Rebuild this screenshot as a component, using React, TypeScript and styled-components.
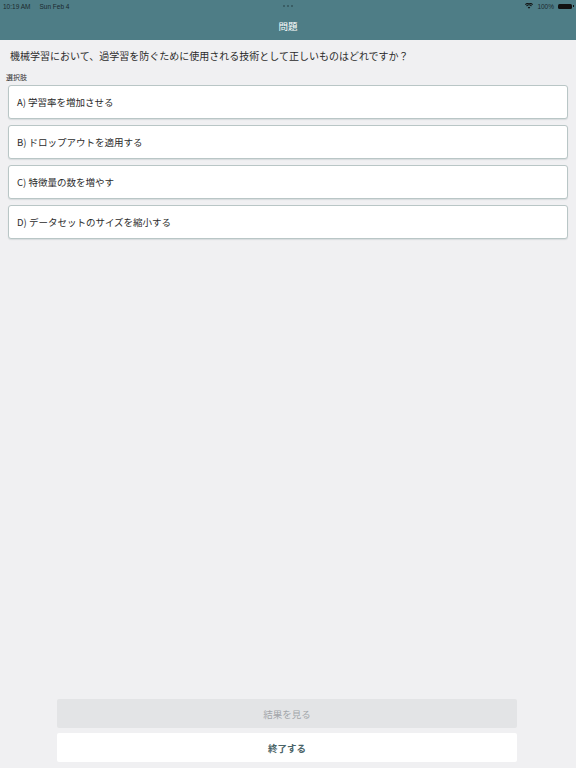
import React from "react";
import styled, { createGlobalStyle } from "styled-components";

const GlobalStyle = createGlobalStyle`
  html, body {
    margin: 0;
    padding: 0;
    background: #f0f0f2;
  }
  body {
    font-family: "Noto Sans CJK JP", "Liberation Sans", sans-serif;
  }
`;

const Page = styled.div`
  display: flex;
  flex-direction: column;
  width: 576px;
  height: 768px;
  background: #f0f0f2;
  overflow: hidden;
`;

const Header = styled.header`
  height: 40px;
  background: #4e7d86;
  display: flex;
  flex-direction: column;
  flex-shrink: 0;
`;

const StatusBar = styled.div`
  height: 12px;
  display: flex;
  align-items: center;
  justify-content: space-between;
  padding: 0 4px 0 3px;
  font-family: "Liberation Sans", sans-serif;
  font-size: 6.5px;
  color: #1c2a2e;
`;

const StatusLeft = styled.div`
  display: flex;
  gap: 9px;
  width: 120px;
`;

const Dots = styled.div`
  display: flex;
  gap: 2px;
  width: 120px;
  justify-content: center;

  span {
    width: 2px;
    height: 2px;
    border-radius: 50%;
    background: #35545a;
  }
`;

const StatusRight = styled.div`
  display: flex;
  align-items: center;
  justify-content: flex-end;
  gap: 4px;
  width: 120px;
`;

const Battery = styled.div`
  width: 14px;
  height: 5px;
  border-radius: 1.5px;
  background: #111;
  position: relative;

  &::after {
    content: "";
    position: absolute;
    right: -2px;
    top: 1.5px;
    width: 1px;
    height: 2px;
    background: #111;
  }
`;

const Title = styled.div`
  flex: 1;
  display: flex;
  align-items: center;
  justify-content: center;
  color: #ffffff;
  font-size: 9.5px;
  padding-bottom: 1px;
`;

const Content = styled.main`
  flex: 1;
  display: flex;
  flex-direction: column;
  padding: 8px 8px 0 8px;
`;

const Question = styled.p`
  margin: 0 0 0 2px;
  font-size: 10px;
  line-height: 16px;
  color: #2b2b2b;
`;

const ChoicesLabel = styled.div`
  margin: 8px 0 3px -2px;
  font-size: 7px;
  line-height: 10px;
  color: #333;
`;

const Choices = styled.div`
  display: flex;
  flex-direction: column;
  gap: 6px;
`;

const Choice = styled.button`
  height: 34px;
  box-sizing: border-box;
  width: 560px;
  text-align: left;
  padding: 0 0 1px 8px;
  background: #ffffff;
  border: 1px solid #b9c6c6;
  border-radius: 3px;
  font-family: inherit;
  font-size: 9.5px;
  color: #2b2b2b;
  box-shadow: 0 1px 1px rgba(120, 140, 140, 0.2);
`;

const Footer = styled.div`
  display: flex;
  flex-direction: column;
  align-items: center;
  gap: 5px;
  padding: 0 2px 6px 0;
`;

const FooterButton = styled.button<{ $primary?: boolean }>`
  width: 460px;
  height: 29px;
  border: none;
  border-radius: 2px;
  font-family: inherit;
  font-size: 9.5px;
  background: ${(p) => (p.$primary ? "#ffffff" : "#e3e4e6")};
  color: ${(p) => (p.$primary ? "#4a6468" : "#a2a6aa")};
  font-weight: ${(p) => (p.$primary ? 700 : 400)};
`;

const WifiIcon = () => (
  <svg width="8" height="6" viewBox="0 0 16 12">
    <path d="M8 11.5 10.5 8.5a3.6 3.6 0 0 0-5 0z" fill="#111" />
    <path d="M3.8 6.8a6 6 0 0 1 8.4 0l1.4-1.6a8.2 8.2 0 0 0-11.2 0z" fill="#111" />
    <path d="M1.3 4a9.6 9.6 0 0 1 13.4 0L16 2.4A11.7 11.7 0 0 0 0 2.4z" fill="#111" />
  </svg>
);

const choices = [
  "A) 学習率を増加させる",
  "B) ドロップアウトを適用する",
  "C) 特徴量の数を増やす",
  "D) データセットのサイズを縮小する",
];

const App: React.FC = () => {
  return (
    <>
      <GlobalStyle />
      <Page>
        <Header>
          <StatusBar>
            <StatusLeft>
              <span>10:19 AM</span>
              <span>Sun Feb 4</span>
            </StatusLeft>
            <Dots>
              <span />
              <span />
              <span />
            </Dots>
            <StatusRight>
              <WifiIcon />
              <span>100%</span>
              <Battery />
            </StatusRight>
          </StatusBar>
          <Title>問題</Title>
        </Header>

        <Content>
          <Question>
            機械学習において、過学習を防ぐために使用される技術として正しいものはどれですか？
          </Question>
          <ChoicesLabel>選択肢</ChoicesLabel>
          <Choices>
            {choices.map((c) => (
              <Choice key={c}>{c}</Choice>
            ))}
          </Choices>
        </Content>

        <Footer>
          <FooterButton disabled>結果を見る</FooterButton>
          <FooterButton $primary>終了する</FooterButton>
        </Footer>
      </Page>
    </>
  );
};

export default App;
